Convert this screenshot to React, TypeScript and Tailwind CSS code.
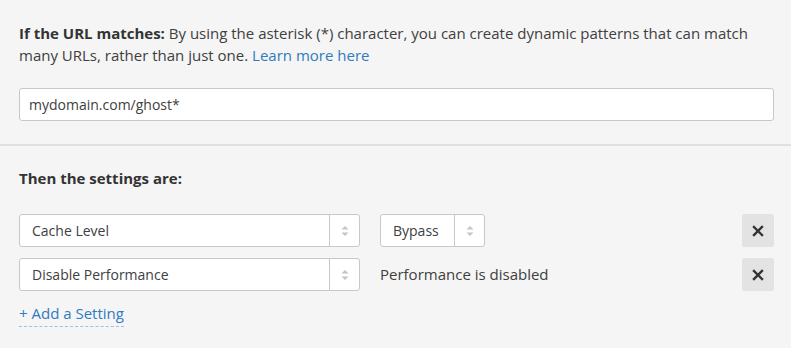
import React from "react";

function Arrows() {
  return (
    <svg width="8" height="12" viewBox="0 0 8 12">
      <path d="M4 1 L7.5 4.5 L0.5 4.5 Z" fill="#c4c4c4" />
      <path d="M4 11 L7.5 7.5 L0.5 7.5 Z" fill="#c4c4c4" />
    </svg>
  );
}

function Select({ label, className }: { label: string; className: string }) {
  return (
    <div className={`flex h-[33px] bg-white border border-[#c8c8c8] rounded-[3px] ${className}`}>
      <div className="flex-1 flex items-center pl-[12px] text-[14px] text-[#404040]">{label}</div>
      <div className="w-[30px] border-l border-[#c8c8c8] flex items-center justify-center">
        <Arrows />
      </div>
    </div>
  );
}

function XButton() {
  return (
    <div className="w-[32px] h-[33px] bg-[#e3e3e3] rounded-[2px] flex items-center justify-center">
      <svg width="12" height="12" viewBox="0 0 12 12">
        <path d="M2 2 L10 10 M10 2 L2 10" stroke="#333" strokeWidth="2.4" strokeLinecap="square" />
      </svg>
    </div>
  );
}

export default function App() {
  return (
    <div className="w-[791px] h-[348px] bg-[#f5f5f5] text-[#404040] overflow-hidden" style={{ fontFamily: '"Open Sans", sans-serif' }}>
      <div className="px-[19px] pt-[22px] pb-[23px]">
        <p className="text-[15px] leading-[22px] w-[740px]">
          <span className="font-bold text-[#333]">If the URL matches:</span> By using the asterisk (*) character, you can create dynamic patterns that can match many URLs, rather than just one.{" "}
          <span className="text-[#2f7bbf]">Learn more here</span>
        </p>
        <div className="mt-[22px] h-[33px] bg-white border border-[#c8c8c8] rounded-[3px] flex items-center pl-[9px] text-[14px] text-[#404040] w-[755px]">
          mydomain.com/ghost*
        </div>
      </div>
      <div className="h-[2px] bg-[#e0e0e0]" />
      <div className="px-[19px] pt-[21px]">
        <div className="text-[15px] font-bold text-[#333] leading-[22px]">Then the settings are:</div>
        <div className="mt-[25px] flex flex-col gap-[11px] w-[755px]">
          <div className="flex items-center">
            <Select label="Cache Level" className="w-[341px]" />
            <Select label="Bypass" className="w-[105px] ml-[20px]" />
            <div className="flex-1" />
            <XButton />
          </div>
          <div className="flex items-center">
            <Select label="Disable Performance" className="w-[341px]" />
            <div className="ml-[20px] text-[15px] text-[#404040]">Performance is disabled</div>
            <div className="flex-1" />
            <XButton />
          </div>
        </div>
        <div className="mt-[11px] inline-block text-[15px] leading-[22px] text-[#2f7bbf] border-b border-dashed border-[#9cc0e4] pb-[2px]">
          + Add a Setting
        </div>
      </div>
    </div>
  );
}
